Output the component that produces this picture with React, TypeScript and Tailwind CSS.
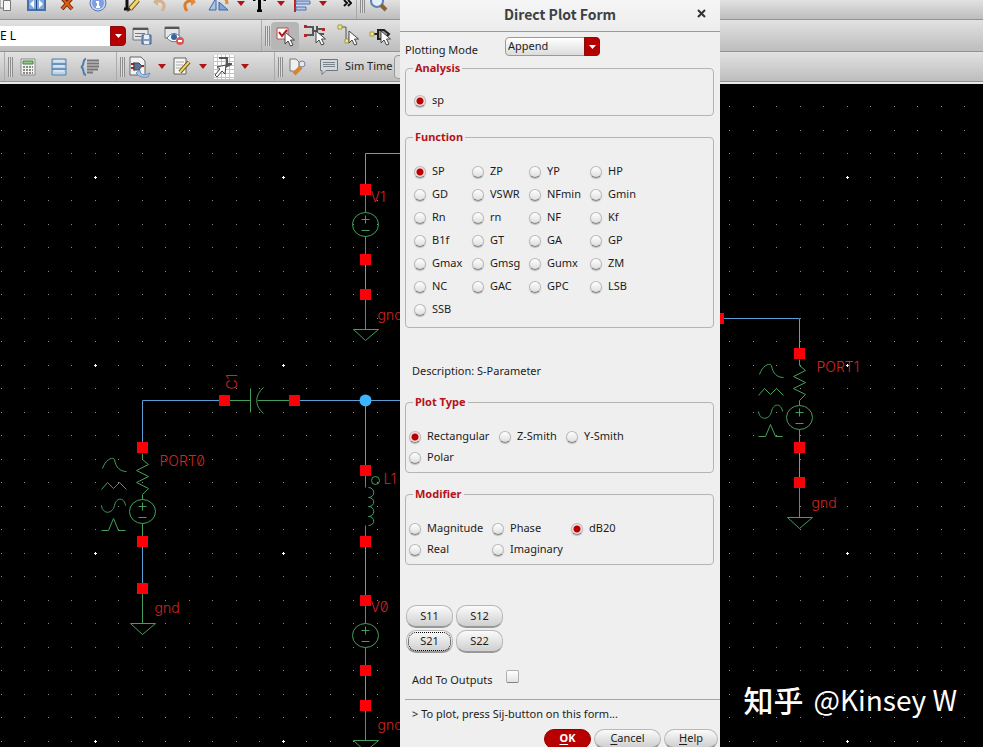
import { clsx } from "clsx";
import type { ReactNode } from "react";

const FUNCTIONS = [
  "SP", "ZP", "YP", "HP",
  "GD", "VSWR", "NFmin", "Gmin",
  "Rn", "rn", "NF", "Kf",
  "B1f", "GT", "GA", "GP",
  "Gmax", "Gmsg", "Gumx", "ZM",
  "NC", "GAC", "GPC", "LSB",
  "SSB",
];
const PLOT_TYPES = ["Rectangular", "Z-Smith", "Y-Smith", "Polar"];
const MODIFIERS = ["Magnitude", "Phase", "dB20", "Real", "Imaginary"];
const S_PARAMS = ["S11", "S12", "S21", "S22"];

/* ---------- toolbar ---------- */

type ToolProps = {
  label: string;
  className: string;
  children: ReactNode;
};

function Tool({ label, className, children }: ToolProps) {
  return (
    <button
      type="button"
      aria-label={label}
      className={clsx("flex h-full shrink-0 items-center justify-center", className)}
    >
      {children}
    </button>
  );
}

function MenuArrow({ className }: { className: string }) {
  return (
    <Tool label="More" className={className}>
      <svg width="8" height="5" viewBox="0 0 8 5">
        <path d="M0 0h8L4 5z" fill="#b01515" />
      </svg>
    </Tool>
  );
}

function Handle() {
  return (
    <div className="ml-[3px] h-5 w-[5px] shrink-0 bg-[repeating-linear-gradient(90deg,#8d8d8d_0_1px,#dedede_1px_2px)]" />
  );
}

function Bar({ children, className }: { children: ReactNode; className: string }) {
  return (
    <div
      className={clsx(
        "flex overflow-hidden border-b border-[#929292] bg-linear-to-b from-[#e2e2e2] to-[#bdbdbd]",
        className,
      )}
    >
      {children}
    </div>
  );
}

function Group({ children, className }: { children?: ReactNode; className?: string }) {
  return <div className={clsx("flex shrink-0 items-center", className)}>{children}</div>;
}

function Cursor({ x, y }: { x: number; y: number }) {
  return (
    <path
      transform={`translate(${x} ${y})`}
      d="M0 0v12l3-3 2.500 5 2.500-1-2.500-5h4z"
      fill="#fff"
      stroke="#444"
      strokeWidth="1"
    />
  );
}

function EditToolbar() {
  return (
    <Bar className="h-5 items-end">
      <Group className="h-8 w-[357px] border-r border-[#aaa]">
        <Tool label="Copy" className="w-5 justify-start">
          <svg width="12" height="18" viewBox="0 0 12 18">
            <path d="M0 3h6v11H0z" fill="#eee" stroke="#777" />
            <path d="M3.500 6.500h7v10h-7z" fill="#f7f7f7" stroke="#777" />
          </svg>
        </Tool>
        <Tool label="Stretch" className="w-8">
          <svg width="19" height="18" viewBox="0 0 19 18">
            <path d="M1 3h17v13H1z" fill="#7fa9dc" stroke="#4670ac" strokeWidth="2" />
            <path d="M9.500 3v13" stroke="#24457a" />
            <path d="M3 10l4-4v8zM16 10l-4-4v8z" fill="#fff" />
          </svg>
        </Tool>
        <Tool label="Delete" className="w-[30px]">
          <svg width="16" height="18" viewBox="0 0 16 18">
            <path d="M3 4l10 11M13 4L3 15" stroke="#7d2407" strokeWidth="4" />
            <path d="M3 4l10 11M13 4L3 15" stroke="#d9621d" strokeWidth="2" />
          </svg>
        </Tool>
        <Tool label="Properties" className="w-8">
          <svg width="18" height="18" viewBox="0 0 18 18">
            <circle cx="9" cy="9" r="8" fill="#c3d2f0" stroke="#6278ab" />
            <circle cx="9" cy="9" r="6" fill="#7f9fe2" />
            <path d="M9 3v2M7 8h2v5M7 13h4" fill="none" stroke="#fff" strokeWidth="2" />
          </svg>
        </Tool>
        <Tool label="Edit label" className="w-8">
          <svg width="20" height="20" viewBox="0 0 20 20">
            <path d="M1 2h12v4M7 2v14M4 16h5" fill="none" stroke="#111" strokeWidth="3" />
            <path d="M18 7l-8 9" stroke="#735a1c" strokeWidth="5" />
            <path d="M18 7l-8 9" stroke="#f3d768" strokeWidth="3" />
            <path d="M9 14l-2 5 4-2z" fill="#333" />
          </svg>
        </Tool>
        <Tool label="Undo" className="w-7">
          <svg width="14" height="18" viewBox="0 0 14 18">
            <path d="M2 8c7-3 12 2 7 9" fill="none" stroke="#d5b28e" strokeWidth="3" />
            <path d="M5 3v9L0 8z" fill="#d5b28e" />
          </svg>
        </Tool>
        <Tool label="Redo" className="w-[30px]">
          <svg width="14" height="18" viewBox="0 0 14 18">
            <path d="M12 8c-7-3-12 2-7 9" fill="none" stroke="#d97c2c" strokeWidth="3" />
            <path d="M9 3v9l5-4z" fill="#e58c38" />
          </svg>
        </Tool>
        <Tool label="Rotate" className="w-[30px]">
          <svg width="22" height="18" viewBox="0 0 22 18">
            <path d="M8 4v12H1z" fill="#a9c4ea" stroke="#3e66a6" />
            <path d="M11 8l9 8h-9z" fill="#7ea4dc" stroke="#3e66a6" />
            <path d="M11 4c4-2 8 0 8 6" fill="none" stroke="#e48d32" strokeWidth="3" />
          </svg>
        </Tool>
        <MenuArrow className="w-3.5" />
        <Tool label="Text" className="w-[22px]">
          <svg width="13" height="18" viewBox="0 0 13 18">
            <path d="M1 7V4h11v3M6.500 4v13M4 17h5" fill="none" stroke="#000" strokeWidth="3" />
          </svg>
        </Tool>
        <MenuArrow className="w-[22px]" />
        <Tool label="Align" className="w-[22px]">
          <svg width="18" height="18" viewBox="0 0 18 18">
            <path d="M1 1v17" stroke="#b02626" strokeWidth="2" />
            <path d="M2 7h14v3H2zM2 13h10v3H2z" fill="#b4c9ec" stroke="#4b73b5" />
          </svg>
        </Tool>
        <MenuArrow className="w-[18px]" />
        <Tool label="More tools" className="grow justify-end pr-1">
          <svg width="9" height="8" viewBox="0 0 9 8">
            <path d="M1 1l3 3-3 3M5 1l3 3-3 3" fill="none" stroke="#111" strokeWidth="2" />
          </svg>
        </Tool>
      </Group>
      <Group className="h-8">
        <Handle />
        <Tool label="Zoom" className="w-7">
          <svg width="18" height="18" viewBox="0 0 18 18">
            <circle cx="7" cy="7" r="6" fill="#e3eefb" stroke="#5b82b8" strokeWidth="2" />
            <path d="M11 11l5 5" stroke="#8a6237" strokeWidth="4" />
          </svg>
        </Tool>
      </Group>
    </Bar>
  );
}

function SelectToolbar() {
  return (
    <Bar className="h-8">
      <Group className="w-[262px] border-r border-[#aaa]">
        <input
          type="text"
          aria-label="Workspace"
          defaultValue="E L"
          className="h-5 w-[110px] bg-white text-xs text-black outline-none"
        />
        <button
          type="button"
          aria-label="Open workspace list"
          className="flex h-5 w-4 items-center justify-center rounded-r-sm border border-[#8a0c0c] bg-[#b40000]"
        >
          <svg width="7" height="4" viewBox="0 0 7 4">
            <path d="M0 0h7L3.500 4z" fill="#fff" />
          </svg>
        </button>
        <Tool label="Save workspace" className="w-8">
          <svg width="20" height="18" viewBox="0 0 20 18">
            <path d="M1 1h15v12H1z" fill="#e4e7ea" stroke="#777" />
            <path d="M1 2h15" stroke="#555" strokeWidth="2" />
            <path d="M3 6.500h10M3 9.500h6" stroke="#777" />
            <path d="M10 8h9v9h-9z" fill="#7f9cc2" stroke="#466186" />
            <path d="M12 8h5v4h-5zM12 14h5v3h-5z" fill="#e8eef6" />
          </svg>
        </Tool>
        <Tool label="Hide workspace" className="w-8">
          <svg width="21" height="20" viewBox="0 0 21 20">
            <path d="M1 1h14v11H1z" fill="#e4e7ea" stroke="#777" />
            <path d="M1 2h14" stroke="#555" strokeWidth="2" />
            <path d="M3 12c4-6 10-6 14 0-4 5-10 5-14 0z" fill="#fff" stroke="#54779f" />
            <circle cx="10" cy="11" r="3" fill="#35679e" />
            <circle cx="16" cy="15" r="4" fill="#d85858" />
            <path d="M14 15h4" stroke="#fff" strokeWidth="2" />
          </svg>
        </Tool>
      </Group>
      <Group>
        <Handle />
        <Tool label="Select" className="w-[30px]">
          <span className="flex size-7 items-center justify-center rounded-sm bg-[#b6b6b6]">
            <svg width="22" height="22" viewBox="0 0 22 22">
              <path d="M3 3h11v11H3z" fill="#fff" stroke="#b55050" />
              <path d="M5 7l3 4 5-6" fill="none" stroke="#c01010" strokeWidth="2" />
              <Cursor x={11} y={7} />
            </svg>
          </span>
        </Tool>
        <Tool label="Select instance" className="w-[31px]">
          <svg width="23" height="23" viewBox="0 0 23 23">
            <path d="M2 3h7v8H2M9 7h5M13 2v10M14 5h5M14 10h6" fill="none" stroke="#555" strokeWidth="2" />
            <path d="M0 1h3v3H0zM0 10h3v3H0zM18 4h3v3h-3z" fill="#b62525" />
            <Cursor x={12} y={7} />
          </svg>
        </Tool>
        <Tool label="Select wire" className="w-[33px]">
          <svg width="22" height="23" viewBox="0 0 22 23">
            <path d="M4 3h5v13h4" fill="none" stroke="#555" strokeWidth="1" />
            <path d="M1 1h4v4H1zM8 15h4v4H8z" fill="#f0e58e" stroke="#a89b3a" />
            <Cursor x={12} y={7} />
          </svg>
        </Tool>
        <Tool label="Select pin" className="w-8">
          <svg width="22" height="23" viewBox="0 0 22 23">
            <path d="M3 10h6M9 6h6l5 4-5 5H9z" fill="#999" stroke="#222" strokeWidth="2" />
            <path d="M1 8h4v4H1z" fill="#f0e58e" stroke="#a89b3a" />
            <Cursor x={12} y={7} />
          </svg>
        </Tool>
      </Group>
    </Bar>
  );
}

function SimToolbar() {
  return (
    <Bar className="h-[30px]">
      <Group className="w-[5px] border-r border-[#aaa]" />
      <Group className="w-[112px] border-r border-[#aaa]">
        <Handle />
        <Tool label="Calculator" className="w-[30px]">
          <svg width="16" height="18" viewBox="0 0 16 18">
            <path d="M1 1h14v16H1z" fill="#f1f1ee" stroke="#888" />
            <path d="M3 3h10v3H3z" fill="#8fca80" stroke="#4a7a42" />
            <path d="M3 9h10M3 12h10M3 15h10" stroke="#888" strokeWidth="2" strokeDasharray="2 1" />
          </svg>
        </Tool>
        <Tool label="Results" className="w-[31px]">
          <svg width="16" height="18" viewBox="0 0 16 18">
            <path d="M1 1h14v5H1zM1 6h14v5H1zM1 11h14v6H1z" fill="#bcd3e8" stroke="#557fa6" />
            <path d="M3 3h10M3 8h10M3 13h10" stroke="#edf5fc" />
          </svg>
        </Tool>
        <Tool label="Variables" className="w-8">
          <svg width="20" height="18" viewBox="0 0 20 18">
            <path d="M6 1C2 1 5 8 1 9c4 1 1 8 5 8" fill="none" stroke="#4d7fae" strokeWidth="2" />
            <path
              d="M7 2.500h12M7 5.500h12M7 8.500h12M7 11.500h11M7 14.500h6"
              stroke="#777"
              strokeWidth="2"
            />
          </svg>
        </Tool>
      </Group>
      <Group className="w-[158px] border-r border-[#aaa]">
        <Handle />
        <Tool label="Schematic" className="w-[30px]">
          <svg width="22" height="22" viewBox="0 0 22 22">
            <path d="M1 1h11l4 4v14H1z" fill="#f2f2f2" stroke="#666" />
            <path d="M2 8h3M2 12h3M12 10h3" stroke="#b22020" strokeWidth="2" />
            <path d="M5 6v9M5 7h5l3 3-3 4H5z" fill="#5c748f" stroke="#394d63" />
            <path d="M11 14c0 5 4 6 10 3l-2 4c-5 1-9 0-12-4z" fill="#a9c5e8" stroke="#6c8fba" />
          </svg>
        </Tool>
        <MenuArrow className="w-3.5" />
        <Tool label="Annotate" className="w-[26px]">
          <svg width="18" height="19" viewBox="0 0 18 19">
            <path d="M1 1h12v16H1z" fill="#f5f5f3" stroke="#666" />
            <path d="M3 5h8M3 8h7M3 11h5" stroke="#aaa" />
            <path d="M16 5L7 15" stroke="#5e4a14" strokeWidth="4" />
            <path d="M16 5L7 15" stroke="#f0d565" strokeWidth="2" />
          </svg>
        </Tool>
        <MenuArrow className="w-4" />
        <Tool label="Probe" className="w-[26px]">
          <svg width="22" height="24" viewBox="0 0 22 24">
            <path d="M0 0h22v24H0z" fill="#fff" />
            <path
              d="M.5 0v24M4.500 0v24M8.500 0v24M12.500 0v24M16.500 0v24M21.500 0v24M0 2.500h22M0 6.500h22M0 10.500h22M0 14.500h22M0 18.500h22M0 22.500h22"
              stroke="#c4c4c4"
            />
            <path d="M6 3h8v6h5M14 6v6M12 12l6-3" fill="none" stroke="#555" strokeWidth="2" />
            <path d="M13 10l-1 9-3-3-5 6-2-2 5-6-3-2z" fill="#fff" stroke="#444" />
          </svg>
        </Tool>
        <MenuArrow className="w-4" />
      </Group>
      <Group>
        <Handle />
        <Tool label="Setup" className="w-[30px]">
          <svg width="18" height="18" viewBox="0 0 18 18">
            <path d="M1 1h6l3 3v9H1z" fill="#f0f0f0" stroke="#777" />
            <circle cx="13" cy="6" r="3" fill="#dfe7f2" stroke="#6b86ac" />
            <path d="M12 9l-7 7" stroke="#d9842c" strokeWidth="4" />
          </svg>
        </Tool>
        <Tool label="Comment" className="w-[32px]">
          <svg width="20" height="18" viewBox="0 0 20 18">
            <path d="M1.500 1.500h17v11H7l-4 4v-4H1.500z" fill="#d4d8dc" stroke="#6f767d" />
            <path d="M4 4.500h12M4 6.500h12M4 8.500h12" stroke="#7c848c" />
          </svg>
        </Tool>
        <label htmlFor="sim-time" className="text-[11px] text-[#222]">
          Sim Time
        </label>
        <input
          id="sim-time"
          type="text"
          className="ml-0.5 h-6 w-24 rounded-sm border border-[#999] bg-[#dcdcdc]"
        />
      </Group>
    </Bar>
  );
}

/* ---------- schematic ---------- */

const GRID_STEPS = [0, 1, 2, 3, 4, 5, 6, 7];

function Pin({ x, y }: { x: number; y: number }) {
  return <rect x={x - 5.5} y={y - 5.5} width="11" height="11" fill="#fb0007" stroke="none" />;
}

function Ground({ x, y }: { x: number; y: number }) {
  return (
    <g>
      <path d={`M${x} ${y}v35M${x - 12} ${y + 35}h25l-13 11z`} />
      <Pin x={x} y={y} />
    </g>
  );
}

function Source({ x, y }: { x: number; y: number }) {
  return (
    <g transform={`translate(${x} ${y})`}>
      <ellipse rx="13" ry="12" />
      <path d="M-4 -5h8M0 -9v8M-4 6h8M0 12v23" />
    </g>
  );
}

function Port({ x, y }: { x: number; y: number }) {
  return (
    <g>
      <g transform={`translate(${x} ${y})`}>
        <path d="M0 6v6l6 5-12 6 12 6-12 6 12 6-6 6v5" />
        <path d="M-40 21c3-9 10-12 12-9 1 8 6 12 12 12" />
        <path d="M-41 42l6-7 6 6 6-6 7 7" />
        <path d="M-41 58c1 9 11 9 13 0 2-9 10-8 11 0" />
        <path d="M-41 83h7l5-12 5 12h7" />
      </g>
      <Source x={x} y={y + 64} />
      <Pin x={x} y={y} />
      <Pin x={x} y={y + 94} />
    </g>
  );
}

function Schematic() {
  return (
    <svg className="absolute inset-0 size-full" role="img" aria-label="Schematic">
      <defs>
        {/* one tile per major grid point, eight minor steps each way */}
        <pattern id="grid" x="94" y="92" width="188" height="188" patternUnits="userSpaceOnUse">
          {GRID_STEPS.map((row) =>
            GRID_STEPS.map((col) => (
              <rect
                key={`${row}-${col}`}
                x={Math.floor(col * 23.5) + 1}
                y={Math.floor(row * 23.5) + 1}
                width="1"
                height="1"
                fill="#8d8d8d"
              />
            )),
          )}
          <path d="M0 1h3v1H0zM1 0h1v3H1z" fill="#fff" />
        </pattern>
      </defs>
      <rect width="100%" height="100%" fill="url(#grid)" />
      {/* drawn in window coordinates, the toolbars take the first 84 */}
      <g transform="translate(0.5 -83.5)">
        <g fill="none" stroke="#5c9fd4">
          <path d="M420 153H365V189M365 259v35" />
          <path d="M142 447V400h77M295 400h125M365 400v70M365 541v59M365 670v35" />
          <path d="M142 541v47M719 318h80v35M799 447v35" />
        </g>
        <g fill="none" stroke="#43a05c">
          <path d="M365 189v23M365 600v23" />
          <Source x={365} y={224} />
          <Pin x={365} y={189} />
          <Pin x={365} y={259} />
          <Ground x={365} y={294} />
          <path d="M224 400h26M250 388v24M263 387c-9 8-9 18 0 26M257 400h38" />
          <Pin x={224} y={400} />
          <Pin x={294} y={400} />
          <Port x={142} y={447} />
          <Ground x={142} y={588} />
          <Port x={799} y={353} />
          <Ground x={799} y={482} />
          <circle cx="375" cy="480" r="4" />
          <path d="M365 470v17M365 525v16M368 487c7 0 7 10 0 10 7 0 7 9 0 9 7 0 7 10 0 10 7 0 7 9 0 9" />
          <Pin x={365} y={470} />
          <Pin x={365} y={541} />
          <Source x={365} y={635} />
          <Pin x={365} y={600} />
          <Pin x={365} y={670} />
          <Ground x={365} y={705} />
          <Pin x={718} y={318} />
        </g>
        <circle cx="365" cy="400" r="6" fill="#3db4ff" />
        <g fill="#d42424" className="font-['Inter'] text-sm font-light slashed-zero">
          <text x="370" y="201">V1</text>
          <text x="377" y="319">gnd</text>
          <text x="159" y="465">PORT0</text>
          <text x="154" y="612">gnd</text>
          <text transform="translate(236 389) rotate(-90)">C1</text>
          <text x="383" y="483">L1</text>
          <text x="370" y="611">V0</text>
          <text x="377" y="729">gnd</text>
          <text x="816" y="371">PORT1</text>
          <text x="811" y="507">gnd</text>
        </g>
      </g>
    </svg>
  );
}

/* ---------- direct plot form ---------- */

type RadioGroupProps = {
  name: string;
  title: string;
  options: string[];
  selected: string;
  className: string;
  gridClassName: string;
};

function RadioGroup({ name, title, options, selected, className, gridClassName }: RadioGroupProps) {
  return (
    <fieldset className={clsx("mr-1.5 ml-[5px] rounded-sm border border-[#b4b4b4]", className)}>
      <legend className="ml-[7px] h-5 px-0.5 text-[11px]/5 font-bold text-[#b5121b]">{title}</legend>
      <div className={clsx("grid", gridClassName)}>
        {options.map((option) => (
          <label key={option} className="flex items-center gap-1.5 whitespace-nowrap">
            <input
              type="radio"
              name={name}
              defaultChecked={option === selected}
              className="size-3 shrink-0 appearance-none rounded-full border border-[#b9b9b9] border-b-[#858585] bg-linear-to-b from-white to-[#dedede] shadow-[0_1px_1px_#bbb] checked:bg-[radial-gradient(circle,#b80000_3px,#f8dede_4px)]"
            />
            {option}
          </label>
        ))}
      </div>
    </fieldset>
  );
}

const pill =
  "rounded-[10px] border border-[#b8b8b8] border-b-2 border-b-[#989898] bg-linear-to-b from-[#fbfbfb] to-[#cfcfcf]";

function DirectPlotForm() {
  return (
    <div
      role="dialog"
      aria-labelledby="form-title"
      className="absolute top-0 left-[400px] min-h-full w-80 bg-[#efefef] text-[11px] text-[#1c1c1c]"
    >
      <header className="relative flex h-8 items-center justify-center border-b border-[#999] bg-linear-to-b from-[#f5f5f5] to-[#ededed] pb-1">
        <h1
          id="form-title"
          className="font-['Noto_Sans_CJK_SC','Noto_Sans',sans-serif] text-sm font-bold text-[#3c4143]"
        >
          Direct Plot Form
        </h1>
        <button type="button" aria-label="Close" className="absolute right-3.5">
          <svg width="9" height="9" viewBox="0 0 9 9">
            <path d="M1 1l7 7M8 1L1 8" stroke="#2e3436" strokeWidth="2" />
          </svg>
        </button>
      </header>

      <form>
        <div className="flex pt-[5px] pl-[5px]">
          <label htmlFor="plotting-mode" className="w-[100px] pt-[5px] leading-4">
            Plotting Mode
          </label>
          <div className="relative h-[19px] w-[95px]">
            <select
              id="plotting-mode"
              className="size-full appearance-none rounded-sm border border-[#9a9a9a] bg-linear-to-b from-white to-[#dcdcdc] pl-0.5"
            >
              <option>Append</option>
              <option>Replace</option>
              <option>New Window</option>
            </select>
            <span className="pointer-events-none absolute inset-y-0 right-0 flex w-4 items-center justify-center rounded-r-sm border border-[#8a0c0c] bg-[#b40000]">
              <svg width="7" height="4" viewBox="0 0 7 4">
                <path d="M0 0h7L3.500 4z" fill="#fff" />
              </svg>
            </span>
          </div>
        </div>

        <RadioGroup
          name="analysis"
          title="Analysis"
          options={["sp"]}
          selected="sp"
          className="pb-[3px]"
          gridClassName="auto-rows-[23px] pt-[11px] pl-2"
        />
        <RadioGroup
          name="function"
          title="Function"
          options={FUNCTIONS}
          selected="SP"
          className="mt-[11px] pb-1.5"
          gridClassName="auto-rows-[23px] grid-cols-[58px_57px_61px_1fr] pt-[13px] pl-2"
        />

        <p className="mt-[33px] pl-3 leading-5">Description: S-Parameter</p>

        <RadioGroup
          name="plot-type"
          title="Plot Type"
          options={PLOT_TYPES}
          selected="Rectangular"
          className="mt-[11px] pb-1"
          gridClassName="auto-rows-[21px] grid-cols-[90px_67px_1fr] pt-3.5 pl-[3px]"
        />
        <RadioGroup
          name="modifier"
          title="Modifier"
          options={MODIFIERS}
          selected="dB20"
          className="mt-[11px] pb-1"
          gridClassName="auto-rows-[21px] grid-cols-[83px_79px_1fr] pt-3.5 pl-[3px]"
        />

        <div className="mt-10 ml-1.5 grid w-fit grid-cols-2 gap-x-[3px] gap-y-0.5">
          {S_PARAMS.map((param) => (
            <button
              key={param}
              type="button"
              className={clsx(
                pill,
                "h-[23px] w-[47px]",
                param === "S21" && "outline-1 -outline-offset-3 outline-black outline-dotted",
              )}
            >
              {param}
            </button>
          ))}
        </div>

        <div className="mt-[17px] flex gap-3.5 pl-3">
          <label htmlFor="add-to-outputs" className="pt-0.5">
            Add To Outputs
          </label>
          <input
            id="add-to-outputs"
            type="checkbox"
            className="size-[13px] appearance-none rounded-xs border border-[#b0b0b0] border-b-[#808080] bg-linear-to-b from-white to-[#e2e2e2]"
          />
        </div>

        <p className="mt-2.5 ml-[5px] border-t border-[#a5a5a5] pt-1 pl-[7px] leading-5">
          &gt; To plot, press Sij-button on this form...
        </p>

        <div className="mt-[5px] flex justify-end gap-[3px] pr-0.5">
          <button
            type="button"
            className="h-5 w-[47px] rounded-[10px] border border-[#8e0000] bg-[#b80000] font-bold text-white"
          >
            <u className="underline-offset-2">O</u>K
          </button>
          <button type="button" className={clsx(pill, "h-5 w-[67px]")}>
            <u className="underline-offset-2">C</u>ancel
          </button>
          <button type="button" className={clsx(pill, "h-5 w-[54px]")}>
            <u className="underline-offset-2">H</u>elp
          </button>
        </div>
      </form>
    </div>
  );
}

export default function App() {
  return (
    <div className="relative flex min-h-screen flex-col overflow-hidden bg-black font-['Noto_Sans','Open_Sans',sans-serif]">
      <div className="border-b-2 border-[#e9e9e9]">
        <EditToolbar />
        <SelectToolbar />
        <SimToolbar />
      </div>
      <main className="relative flex grow items-end justify-end">
        <Schematic />
        <p className="relative flex items-center gap-2.5 pr-[26px] pb-7 font-['Noto_Sans_CJK_SC',sans-serif] leading-10 text-white">
          <span className="text-3xl font-medium">知乎</span>
          <span className="text-[28px]">@Kinsey W</span>
        </p>
      </main>
      <DirectPlotForm />
    </div>
  );
}
